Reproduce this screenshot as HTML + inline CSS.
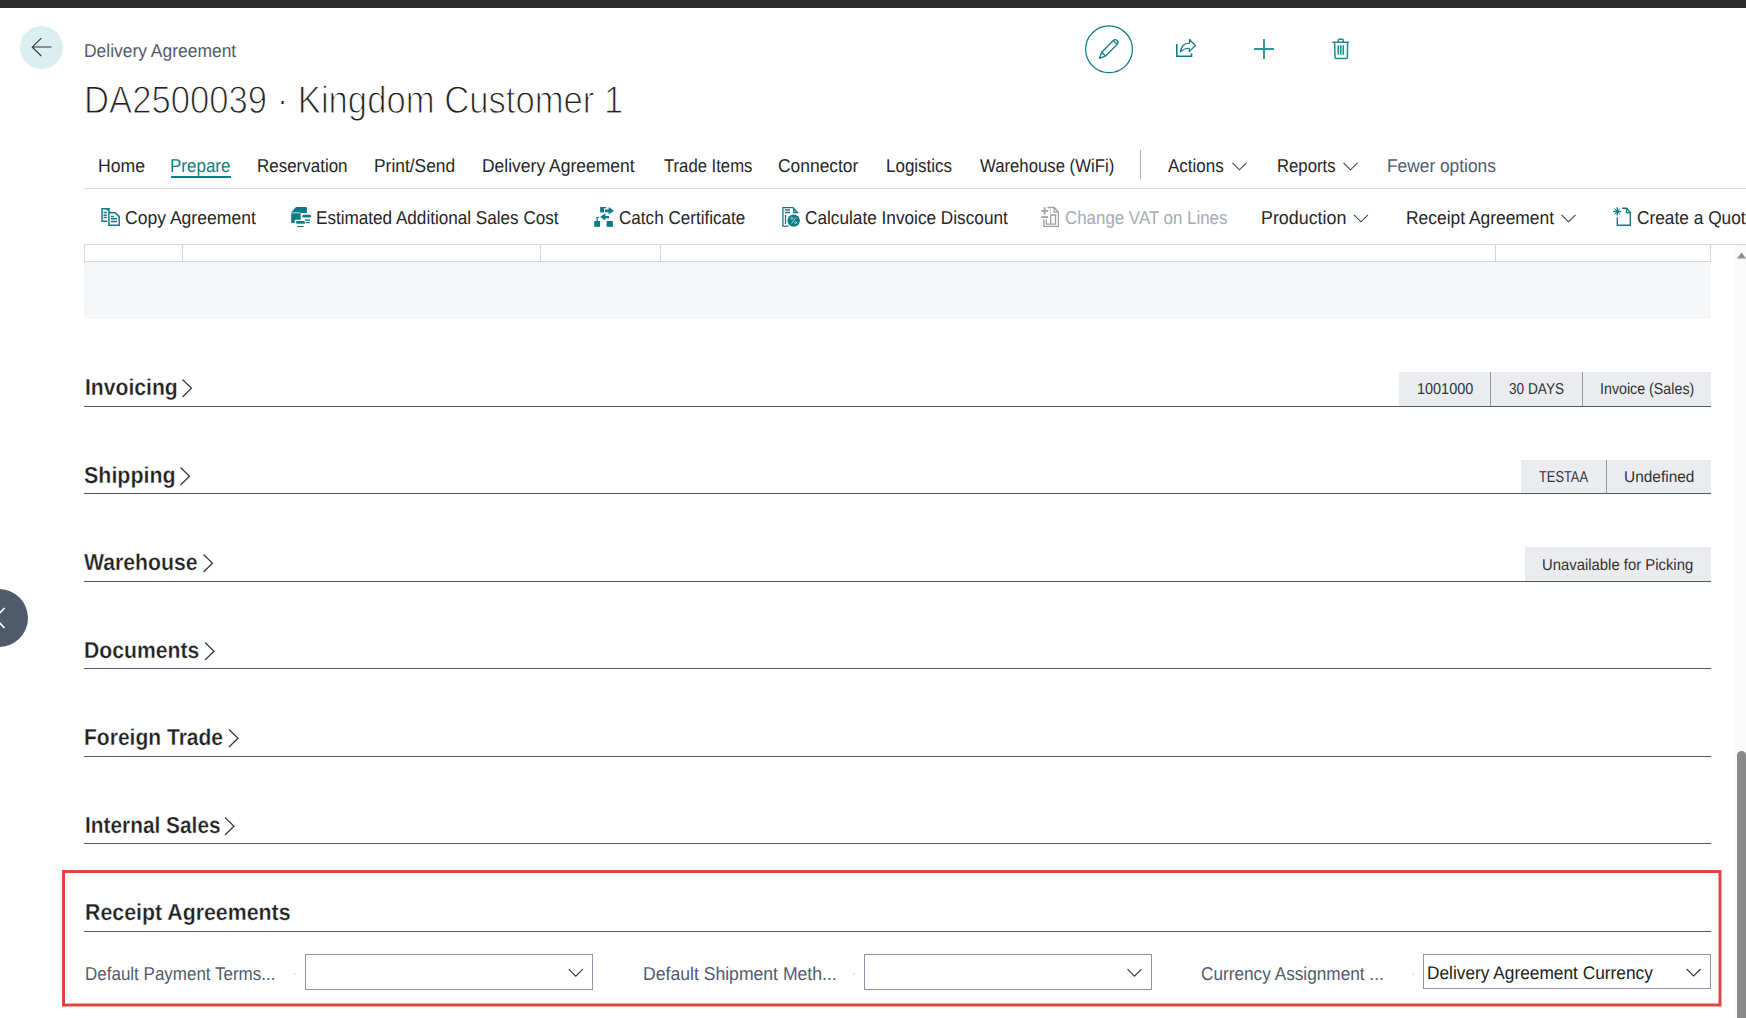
<!DOCTYPE html>
<html><head><meta charset="utf-8"><style>
html,body{margin:0;padding:0;width:1746px;height:1018px;overflow:hidden;background:#fff;}
body{position:relative;font-family:"Liberation Sans",sans-serif;}
#title{-webkit-text-stroke:1.1px #fff;}
#s1,#s2,#s3,#s4,#s5,#s6,#s7{-webkit-text-stroke:0.3px #fff;}
.t{position:absolute;white-space:nowrap;line-height:1;transform-origin:0 0;text-rendering:geometricPrecision;}
.r{position:absolute;}
</style></head><body>
<div class="r" style="left:0;top:0;width:1746px;height:8px;background:#2b2b2b"></div>
<div class="r" style="left:20px;top:26px;width:43px;height:43px;border-radius:50%;background:#dbeff2"></div>
<div class="r" style="left:-30px;top:589px;width:58px;height:58px;border-radius:50%;background:#4f5a6b"></div>
<!-- table -->
<div class="r" style="left:84px;top:262px;width:1627px;height:57px;background:#f5f6f8"></div>
<!-- chips -->
<div class="r" style="left:1399px;top:372px;width:312px;height:34px;background:#ebecef"></div>
<div class="r" style="left:1521px;top:460px;width:190px;height:33px;background:#ebecef"></div>
<div class="r" style="left:1525px;top:547px;width:186px;height:34px;background:#ebecef"></div>
<!-- scrollbar -->
<div class="r" style="left:1734px;top:245px;width:12px;height:773px;background:#fafafa"></div>
<div class="r" style="left:1737px;top:751px;width:9px;height:280px;border-radius:5px 5px 0 0;background:#8a8a8a"></div>
<svg class="r" style="left:0;top:0" width="1746" height="1018" viewBox="0 0 1746 1018">
<!-- back arrow -->
<g fill="none" stroke="#383838" stroke-width="1.15">
<path d="M51.5 47H32M41.3 38.2L32.3 47.2L41.3 56"/>
</g>
<!-- edit circle -->
<circle cx="1109" cy="49.3" r="23.4" fill="none" stroke="#0e7c86" stroke-width="1.3"/>
<g fill="none" stroke="#0e7c86" stroke-width="1.35" stroke-linejoin="round" transform="translate(1099.4 58.3) rotate(-45)">
<path d="M0 0L6 -2.7H22.4A2.7 2.7 0 0 1 22.4 2.7H6Z"/>
<path d="M6 -2.7V2.7M22.4 -2.7V2.7"/>
</g>
<!-- share -->
<g fill="none" stroke="#0e7c86" stroke-width="1.6">
<path d="M1176.8 44V56.3H1191.5V53.3"/>
<path d="M1180.4 51.9C1181 46 1184 43.2 1189.5 43.1V39.5L1195.3 45.5L1189.3 51.6V48.3C1185.5 48 1183 49.5 1180.4 51.9Z" stroke-width="1.2" stroke-linejoin="round"/>
</g>
<!-- plus -->
<g stroke="#2a969c" stroke-width="1.9">
<path d="M1254 49H1274M1264 39V59"/>
</g>
<!-- trash -->
<g fill="none" stroke="#1a8a91" stroke-width="1.5">
<path d="M1332.2 42.3H1349M1338.3 42V40.2A1 1 0 0 1 1339.3 39.3H1342.2A1 1 0 0 1 1343.2 40.2V42"/>
<path d="M1334.6 42.5L1335 57.2A1.4 1.4 0 0 0 1336.4 58.6H1346A1.4 1.4 0 0 0 1347.4 57.2L1347.6 42.5"/>
<path d="M1338.3 45.2V54.8M1340.8 45.2V54.8M1343.3 45.2V54.8"/>
</g>
<!-- tab underline -->
<rect x="171" y="176" width="60" height="2" fill="#0e7c86"/>
<!-- tab separator -->
<rect x="1140" y="150" width="1" height="29" fill="#aab0b8"/>
<!-- chevrons in tabs -->
<g fill="none" stroke="#444" stroke-width="1.1">
<path d="M1232.5 162.8L1239.5 169.8L1246.5 162.8"/>
<path d="M1343.5 162.8L1350.5 169.8L1357.5 162.8"/>
<path d="M1354 214.8L1361 221.8L1368 214.8"/>
<path d="M1561.5 214.8L1568.5 221.8L1575.5 214.8"/>
</g>
<!-- dividers -->
<rect x="84" y="188" width="1662" height="1" fill="#d5d8dd"/>
<rect x="84" y="244" width="1662" height="1" fill="#d5d8dd"/>
<!-- table grid -->
<g fill="#d3d6dc">
<rect x="84" y="261" width="1627" height="1"/>
<rect x="84" y="244" width="1" height="18"/>
<rect x="182" y="244" width="1" height="18"/>
<rect x="540" y="244" width="1" height="18"/>
<rect x="660" y="244" width="1" height="18"/>
<rect x="1495" y="244" width="1" height="18"/>
<rect x="1710" y="244" width="1" height="18"/>
</g>
<!-- scroll arrow -->
<path d="M1737 258.5L1741.5 252.5L1746 258.5Z" fill="#8a8a8a"/>
<!-- section lines -->
<g fill="#4f596a">
<rect x="84" y="406" width="1627" height="1"/>
<rect x="84" y="493" width="1627" height="1"/>
<rect x="84" y="581" width="1627" height="1"/>
<rect x="84" y="668" width="1627" height="1"/>
<rect x="84" y="756" width="1627" height="1"/>
<rect x="84" y="843" width="1627" height="1"/>
<rect x="84" y="931" width="1627" height="1"/>
</g>
<!-- section chevrons -->
<g fill="none" stroke="#333" stroke-width="1.2">
<path d="M182.5 379.5L191.5 388.2L182.5 397"/>
<path d="M180.5 467.5L189.5 476.2L180.5 485"/>
<path d="M203.5 554.5L212.5 563.2L203.5 572"/>
<path d="M205 642.5L214 651.2L205 660"/>
<path d="M229 729.5L238 738.2L229 747"/>
<path d="M225 817.5L234 826.2L225 835"/>
</g>
<!-- chip dividers -->
<g fill="#9a9a9a">
<rect x="1490" y="372" width="1" height="34"/>
<rect x="1582" y="372" width="1" height="34"/>
<rect x="1606" y="460" width="1" height="33"/>
</g>
<!-- red box -->
<rect x="63.5" y="871.5" width="1656.5" height="133.5" fill="none" stroke="#e0443c" stroke-width="3"/>
<!-- inputs -->
<g fill="none" stroke="#8b95a3" stroke-width="1">
<rect x="305.5" y="954.5" width="287" height="35"/>
<rect x="864.5" y="954.5" width="287" height="35"/>
<rect x="1423.5" y="954.5" width="287" height="34"/>
</g>
<g fill="none" stroke="#333" stroke-width="1.1">
<path d="M568.8 969.2L575.8 976.2L582.8 969.2"/>
<path d="M1127.5 969.2L1134.5 976.2L1141.5 969.2"/>
<path d="M1686.6 969L1693.6 976L1700.6 969"/>
</g>
<g fill="#c7cbd1">
<circle cx="295" cy="974" r="0.8"/>
<circle cx="854" cy="974" r="0.8"/>
<circle cx="1413" cy="974" r="0.8"/>
</g>
<!-- float chevron -->
<path d="M4.5 608L-5 618L4.5 628" fill="none" stroke="#fff" stroke-width="1.6"/>
<!-- action icons -->
<g fill="none" stroke="#0e7c86" stroke-width="1.5">
<!-- copy -->
<path d="M110 208.7H102V221.3H107.2M106.5 208.7L110 212"/>
<path d="M103.5 212.5H106.8M103.5 215.3H106.8M103.5 217.5H106.8"/>
<path d="M108.9 212.7H115.2L119.2 216.6V225.3H108.9Z"/>
<path d="M111 216.4H114M111 218.8H117M111 221.5H117"/>
<!-- change vat (gray) -->
</g>
<g fill="#0e7c86">
<!-- estimated -->
<path d="M291 212.6L296 207H306.2L306.9 207.8V213H300.3V212.6Z"/>
<path d="M291.2 213.2H300.7V219.7H294.8V223H291.2Z"/>
<rect x="302.3" y="214.8" width="8.8" height="2.8" rx="1.3"/>
<rect x="305" y="219.3" width="5" height="1.4"/>
<rect x="306" y="222.1" width="4" height="1.1"/>
<rect x="296" y="221" width="9" height="2.8" rx="1.3"/>
<rect x="297.3" y="226" width="6.4" height="1.1"/>
<!-- catch -->
<rect x="594.2" y="221" width="5.8" height="5.8"/>
<rect x="606.6" y="221" width="6.3" height="5.8"/>
<path d="M600.1 207H606.3V208.3H604V212.6H600.1Z"/>
<path d="M605 209.4H608.6V207L614 210.8L608.6 214.4V212.3H605Z"/>
<path d="M609 215.9H605.4V213.2L600.1 217L605.4 220.6V218.2H609Z"/>
<rect x="596.5" y="217" width="1.3" height="4"/>
<rect x="596.5" y="217" width="2.5" height="1.1"/>
<!-- calc -->
<circle cx="793.7" cy="220.6" r="6.2"/>
</g>
<g fill="none" stroke="#0e7c86" stroke-width="1.3">
<path d="M788.5 226.2H782.9V207.7H793L797.5 212.5H793.7V208"/>
<path d="M785.1 210H789.9M785.1 212.5H789.9M785.5 215V224"/>
</g>
<path d="M791.5 223.5L796 217.5" stroke="#bfe0e3" stroke-width="0.9"/>
<circle cx="791.8" cy="218.3" r="1" fill="none" stroke="#bfe0e3" stroke-width="0.8"/>
<circle cx="795.7" cy="222.7" r="1" fill="none" stroke="#bfe0e3" stroke-width="0.8"/>
<g fill="none" stroke="#a0a0a0" stroke-width="1.3">
<path d="M1047.5 207.5H1054.2L1058.4 212V226.3H1043.8V219.5"/>
<path d="M1054.2 207.5V212.2H1058.4"/>
<path d="M1041.2 210.9H1048.1M1044.6 207.2V214.4M1041.2 217.1H1048.1" stroke-width="1.8"/>
<path d="M1050.4 209.6V210.4M1050.4 212.2V213" stroke-width="1.2"/>
<path d="M1046.3 219.5V224.2H1055.5V215H1050.7V224"/>
</g>
<g fill="none" stroke="#0e7c86" stroke-width="1.4">
<path d="M1622.2 208.3H1626.8L1630.3 212.5V225.3H1617.3V217.2"/>
<path d="M1626.5 208.5V212.6H1630"/>
<path d="M1613.3 211.5H1621.3M1617.3 207.3V215.6"/>
<path d="M1614.5 208.5L1620 214.5M1620 208.5L1614.5 214.5" stroke-width="1"/>
</g>
</svg>

<span id="bc" class="t" style="left:84.00px;top:42.25px;font-size:18.6px;font-weight:400;color:#505c6e;transform:scaleX(0.9379)">Delivery Agreement</span>
<span id="title" class="t" style="left:84.00px;top:81.61px;font-size:38.5px;font-weight:400;color:#222;transform:scaleX(0.8999)">DA2500039 · Kingdom Customer 1</span>
<span id="tab1" class="t" style="left:98.00px;top:157.25px;font-size:18.6px;font-weight:400;color:#262626;transform:scaleX(0.9485)">Home</span>
<span id="tab2" class="t" style="left:170.00px;top:157.25px;font-size:18.6px;font-weight:400;color:#0e7c86;transform:scaleX(0.9145)">Prepare</span>
<span id="tab3" class="t" style="left:257.00px;top:157.25px;font-size:18.6px;font-weight:400;color:#262626;transform:scaleX(0.9125)">Reservation</span>
<span id="tab4" class="t" style="left:374.00px;top:157.25px;font-size:18.6px;font-weight:400;color:#262626;transform:scaleX(0.9348)">Print/Send</span>
<span id="tab5" class="t" style="left:482.40px;top:157.25px;font-size:18.6px;font-weight:400;color:#262626;transform:scaleX(0.9398)">Delivery Agreement</span>
<span id="tab6" class="t" style="left:663.80px;top:157.25px;font-size:18.6px;font-weight:400;color:#262626;transform:scaleX(0.8970)">Trade Items</span>
<span id="tab7" class="t" style="left:778.40px;top:157.25px;font-size:18.6px;font-weight:400;color:#262626;transform:scaleX(0.9366)">Connector</span>
<span id="tab8" class="t" style="left:886.00px;top:157.25px;font-size:18.6px;font-weight:400;color:#262626;transform:scaleX(0.9129)">Logistics</span>
<span id="tab9" class="t" style="left:980.00px;top:157.25px;font-size:18.6px;font-weight:400;color:#262626;transform:scaleX(0.9000)">Warehouse (WiFi)</span>
<span id="tab10" class="t" style="left:1168.00px;top:157.25px;font-size:18.6px;font-weight:400;color:#262626;transform:scaleX(0.9150)">Actions</span>
<span id="tab11" class="t" style="left:1276.80px;top:157.25px;font-size:18.6px;font-weight:400;color:#262626;transform:scaleX(0.8988)">Reports</span>
<span id="tab12" class="t" style="left:1387.20px;top:157.25px;font-size:18.6px;font-weight:400;color:#505c6e;transform:scaleX(0.9322)">Fewer options</span>
<span id="a1" class="t" style="left:125.40px;top:209.25px;font-size:18.6px;font-weight:400;color:#262626;transform:scaleX(0.9443)">Copy Agreement</span>
<span id="a2" class="t" style="left:316.00px;top:209.25px;font-size:18.6px;font-weight:400;color:#262626;transform:scaleX(0.9206)">Estimated Additional Sales Cost</span>
<span id="a3" class="t" style="left:619.00px;top:209.25px;font-size:18.6px;font-weight:400;color:#262626;transform:scaleX(0.9191)">Catch Certificate</span>
<span id="a4" class="t" style="left:805.00px;top:209.25px;font-size:18.6px;font-weight:400;color:#262626;transform:scaleX(0.9257)">Calculate Invoice Discount</span>
<span id="a5" class="t" style="left:1065.40px;top:209.25px;font-size:18.6px;font-weight:400;color:#a5abb3;transform:scaleX(0.9085)">Change VAT on Lines</span>
<span id="a6" class="t" style="left:1261.00px;top:209.25px;font-size:18.6px;font-weight:400;color:#262626;transform:scaleX(0.9599)">Production</span>
<span id="a7" class="t" style="left:1405.60px;top:209.25px;font-size:18.6px;font-weight:400;color:#262626;transform:scaleX(0.9363)">Receipt Agreement</span>
<span id="a8" class="t" style="left:1637.00px;top:209.25px;font-size:18.6px;font-weight:400;color:#262626;transform:scaleX(0.9300)">Create a Quote</span>
<span id="s1" class="t" style="left:84.60px;top:376.24px;font-size:23.1px;font-weight:700;color:#212121;transform:scaleX(0.9153)">Invoicing</span>
<span id="s2" class="t" style="left:84.00px;top:464.24px;font-size:23.1px;font-weight:700;color:#212121;transform:scaleX(0.9280)">Shipping</span>
<span id="s3" class="t" style="left:84.00px;top:551.44px;font-size:23.1px;font-weight:700;color:#212121;transform:scaleX(0.9186)">Warehouse</span>
<span id="s4" class="t" style="left:84.00px;top:639.34px;font-size:23.1px;font-weight:700;color:#212121;transform:scaleX(0.9170)">Documents</span>
<span id="s5" class="t" style="left:84.00px;top:726.44px;font-size:23.1px;font-weight:700;color:#212121;transform:scaleX(0.9107)">Foreign Trade</span>
<span id="s6" class="t" style="left:84.60px;top:814.34px;font-size:23.1px;font-weight:700;color:#212121;transform:scaleX(0.9028)">Internal Sales</span>
<span id="s7" class="t" style="left:84.60px;top:901.36px;font-size:23.2px;font-weight:700;color:#212121;transform:scaleX(0.9204)">Receipt Agreements</span>
<span id="c1" class="t" style="left:1416.80px;top:381.62px;font-size:15.8px;font-weight:400;color:#333;transform:scaleX(0.9152)">1001000</span>
<span id="c2" class="t" style="left:1509.00px;top:381.62px;font-size:15.8px;font-weight:400;color:#333;transform:scaleX(0.8637)">30 DAYS</span>
<span id="c3" class="t" style="left:1599.80px;top:381.62px;font-size:15.8px;font-weight:400;color:#333;transform:scaleX(0.9021)">Invoice (Sales)</span>
<span id="c4" class="t" style="left:1539.00px;top:469.82px;font-size:15.8px;font-weight:400;color:#333;transform:scaleX(0.8120)">TESTAA</span>
<span id="c5" class="t" style="left:1623.80px;top:469.82px;font-size:15.8px;font-weight:400;color:#333;transform:scaleX(0.9778)">Undefined</span>
<span id="c6" class="t" style="left:1542.40px;top:557.62px;font-size:15.8px;font-weight:400;color:#333;transform:scaleX(0.9409)">Unavailable for Picking</span>
<span id="f1" class="t" style="left:84.60px;top:965.25px;font-size:18.6px;font-weight:400;color:#505c6e;transform:scaleX(0.9137)">Default Payment Terms...</span>
<span id="f2" class="t" style="left:643.40px;top:965.25px;font-size:18.6px;font-weight:400;color:#505c6e;transform:scaleX(0.9466)">Default Shipment Meth...</span>
<span id="f3" class="t" style="left:1201.20px;top:965.25px;font-size:18.6px;font-weight:400;color:#505c6e;transform:scaleX(0.9256)">Currency Assignment ...</span>
<span id="f4" class="t" style="left:1427.40px;top:964.11px;font-size:18.3px;font-weight:400;color:#212121;transform:scaleX(0.9458)">Delivery Agreement Currency</span>
</body></html>
